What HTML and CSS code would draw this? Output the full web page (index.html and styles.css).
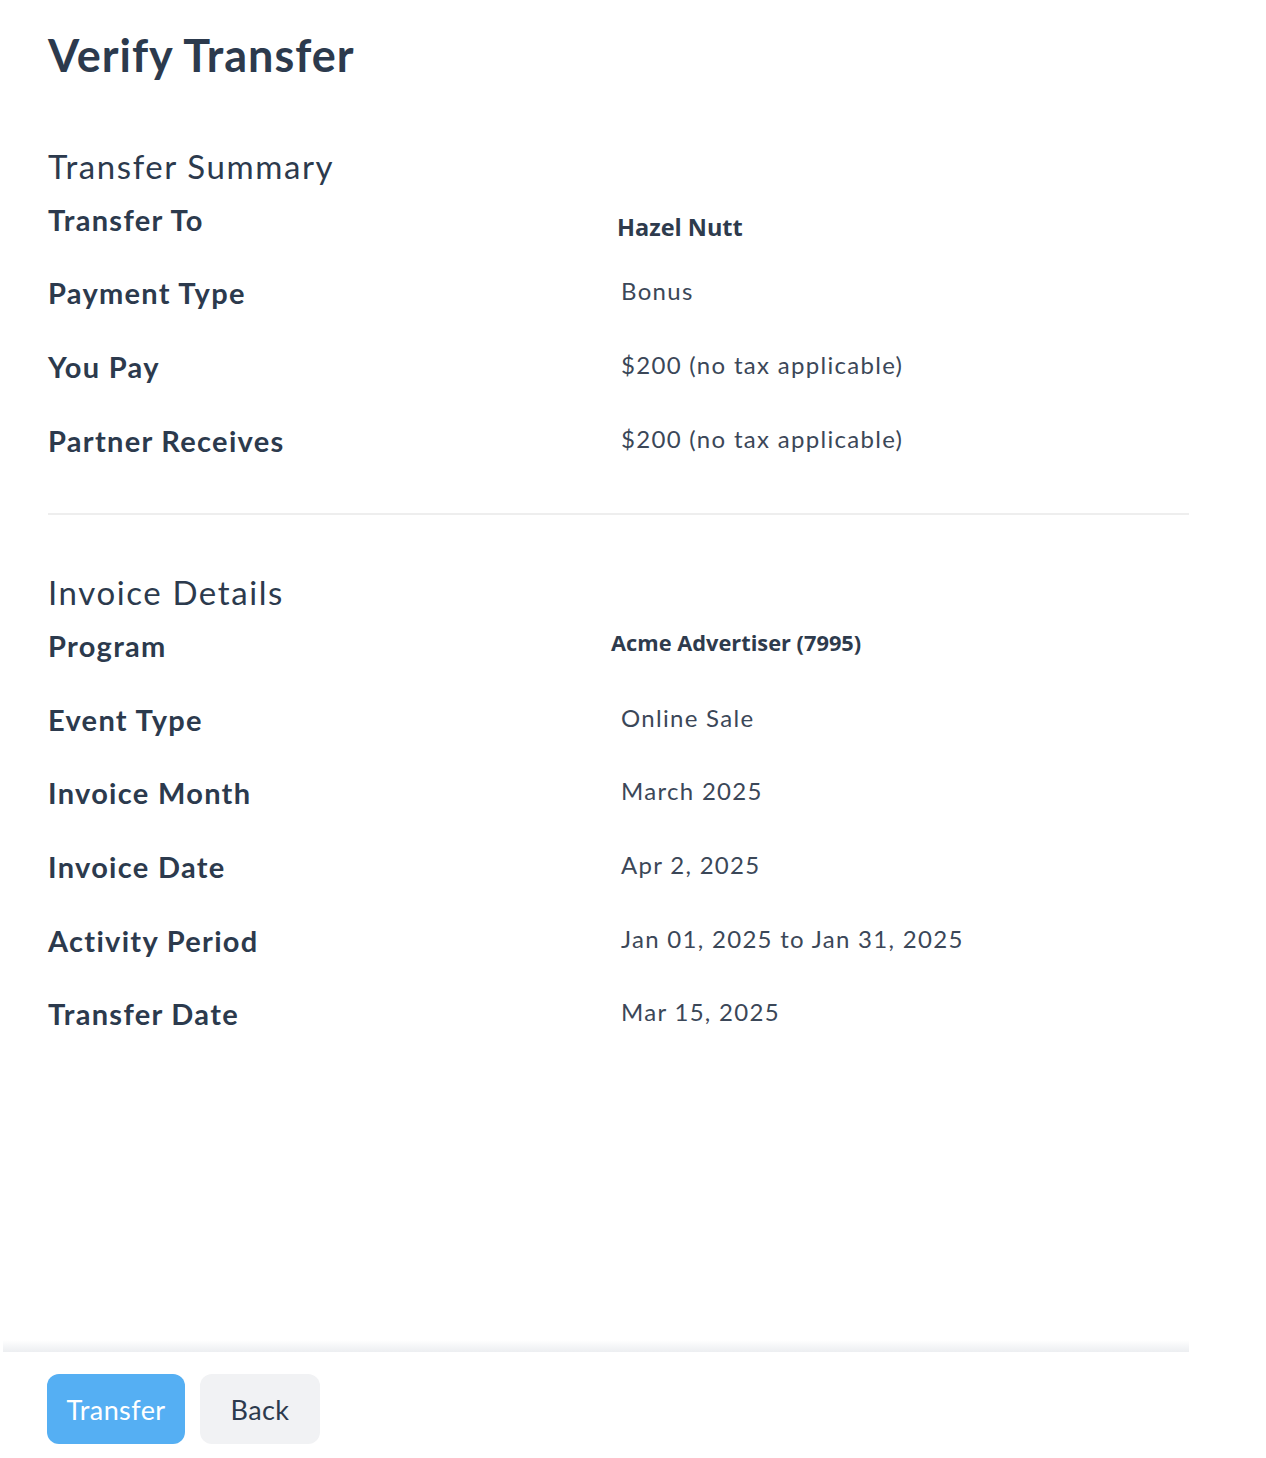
FILE: index.html
```html
<!DOCTYPE html>
<html lang="en">
<head>
<meta charset="utf-8">
<title>Verify Transfer</title>
<link rel="stylesheet" href="styles.css">
</head>
<body>
<div class="page">
  <main class="content">
    <h1 class="title">Verify Transfer</h1>

    <section class="section section-first">
      <h2 class="section-title">Transfer Summary</h2>
      <div class="rows">
        <div class="row"><div class="label">Transfer To</div><div class="value value-name">Hazel Nutt</div></div>
        <div class="row"><div class="label">Payment Type</div><div class="value">Bonus</div></div>
        <div class="row"><div class="label">You Pay</div><div class="value">$200 (no tax applicable)</div></div>
        <div class="row"><div class="label">Partner Receives</div><div class="value">$200 (no tax applicable)</div></div>
      </div>
    </section>

    <hr class="divider">

    <section class="section">
      <h2 class="section-title section-title-second">Invoice Details</h2>
      <div class="rows">
        <div class="row"><div class="label">Program</div><div class="value value-program">Acme Advertiser (7995)</div></div>
        <div class="row"><div class="label">Event Type</div><div class="value">Online Sale</div></div>
        <div class="row"><div class="label">Invoice Month</div><div class="value">March 2025</div></div>
        <div class="row"><div class="label">Invoice Date</div><div class="value">Apr 2, 2025</div></div>
        <div class="row"><div class="label">Activity Period</div><div class="value">Jan 01, 2025 to Jan 31, 2025</div></div>
        <div class="row"><div class="label">Transfer Date</div><div class="value">Mar 15, 2025</div></div>
      </div>
    </section>
  </main>

  <footer class="footer">
    <div class="footer-shadow"></div>
    <div class="actions">
      <button class="btn btn-primary" type="button">Transfer</button>
      <button class="btn btn-secondary" type="button">Back</button>
    </div>
  </footer>
</div>
</body>
</html>
```

FILE: styles.css
```css
* { box-sizing: border-box; }

body {
  margin: 0;
  background: #ffffff;
  color: #2c3e50;
  font-family: Lato, "Noto Sans", "DejaVu Sans", sans-serif;
}

.page {
  min-height: 1458px;
  display: flex;
  flex-direction: column;
}

.content {
  padding: 0 77px 0 48px;
}

.title {
  margin: 27px 0 0;
  font-size: 45px;
  line-height: 56px;
  font-weight: 700;
  letter-spacing: 1px;
  color: #2c3a4d;
}

.section-title {
  margin: 65px 0 -1px;
  font-size: 33px;
  line-height: 36px;
  font-weight: 400;
  letter-spacing: 1.6px;
  color: #2c3a4d;
}

.section-title-second {
  margin-top: 59px;
}

.row {
  display: grid;
  grid-template-columns: 573px 1fr;
  align-items: center;
  height: 73.6px;
}

.label {
  font-size: 29px;
  font-weight: 700;
  line-height: 36px;
  letter-spacing: 1.3px;
  color: #2c3a4d;
}

.value {
  font-size: 24px;
  line-height: 30px;
  letter-spacing: 1.3px;
  color: #3b4758;
  margin-top: -4px;
}

.value-name {
  font-family: "Open Sans", "Noto Sans", sans-serif;
  font-weight: 700;
  font-size: 23.5px;
  letter-spacing: 0;
  margin-left: -4px;
  margin-top: 14px;
  color: #2e3b4d;
}

.value-program {
  font-family: "Open Sans", "Noto Sans", sans-serif;
  font-weight: 700;
  font-size: 21.8px;
  letter-spacing: 0;
  margin-left: -10px;
  margin-top: -6px;
  color: #2e3b4d;
}

.divider {
  margin: 36px 0 0;
  border: 0;
  height: 2px;
  background: #eeeeee;
}

.footer {
  margin-top: auto;
}

.footer-shadow {
  margin-left: 3px;
  width: 1186px;
  height: 12px;
  background: linear-gradient(to bottom, rgba(236, 238, 240, 0), #eceef1);
}

.actions {
  display: flex;
  gap: 15px;
  padding: 22px 0 14px 47px;
}

.btn {
  height: 70px;
  border: 0;
  border-radius: 12px;
  font-family: Lato, "Noto Sans", sans-serif;
  font-size: 27px;
  letter-spacing: 0.4px;
  padding: 0;
}

.btn-primary {
  width: 138px;
  background: #55aff3;
  color: #ffffff;
}

.btn-secondary {
  width: 120px;
  background: #f1f2f4;
  color: #2c3a4d;
}
```
